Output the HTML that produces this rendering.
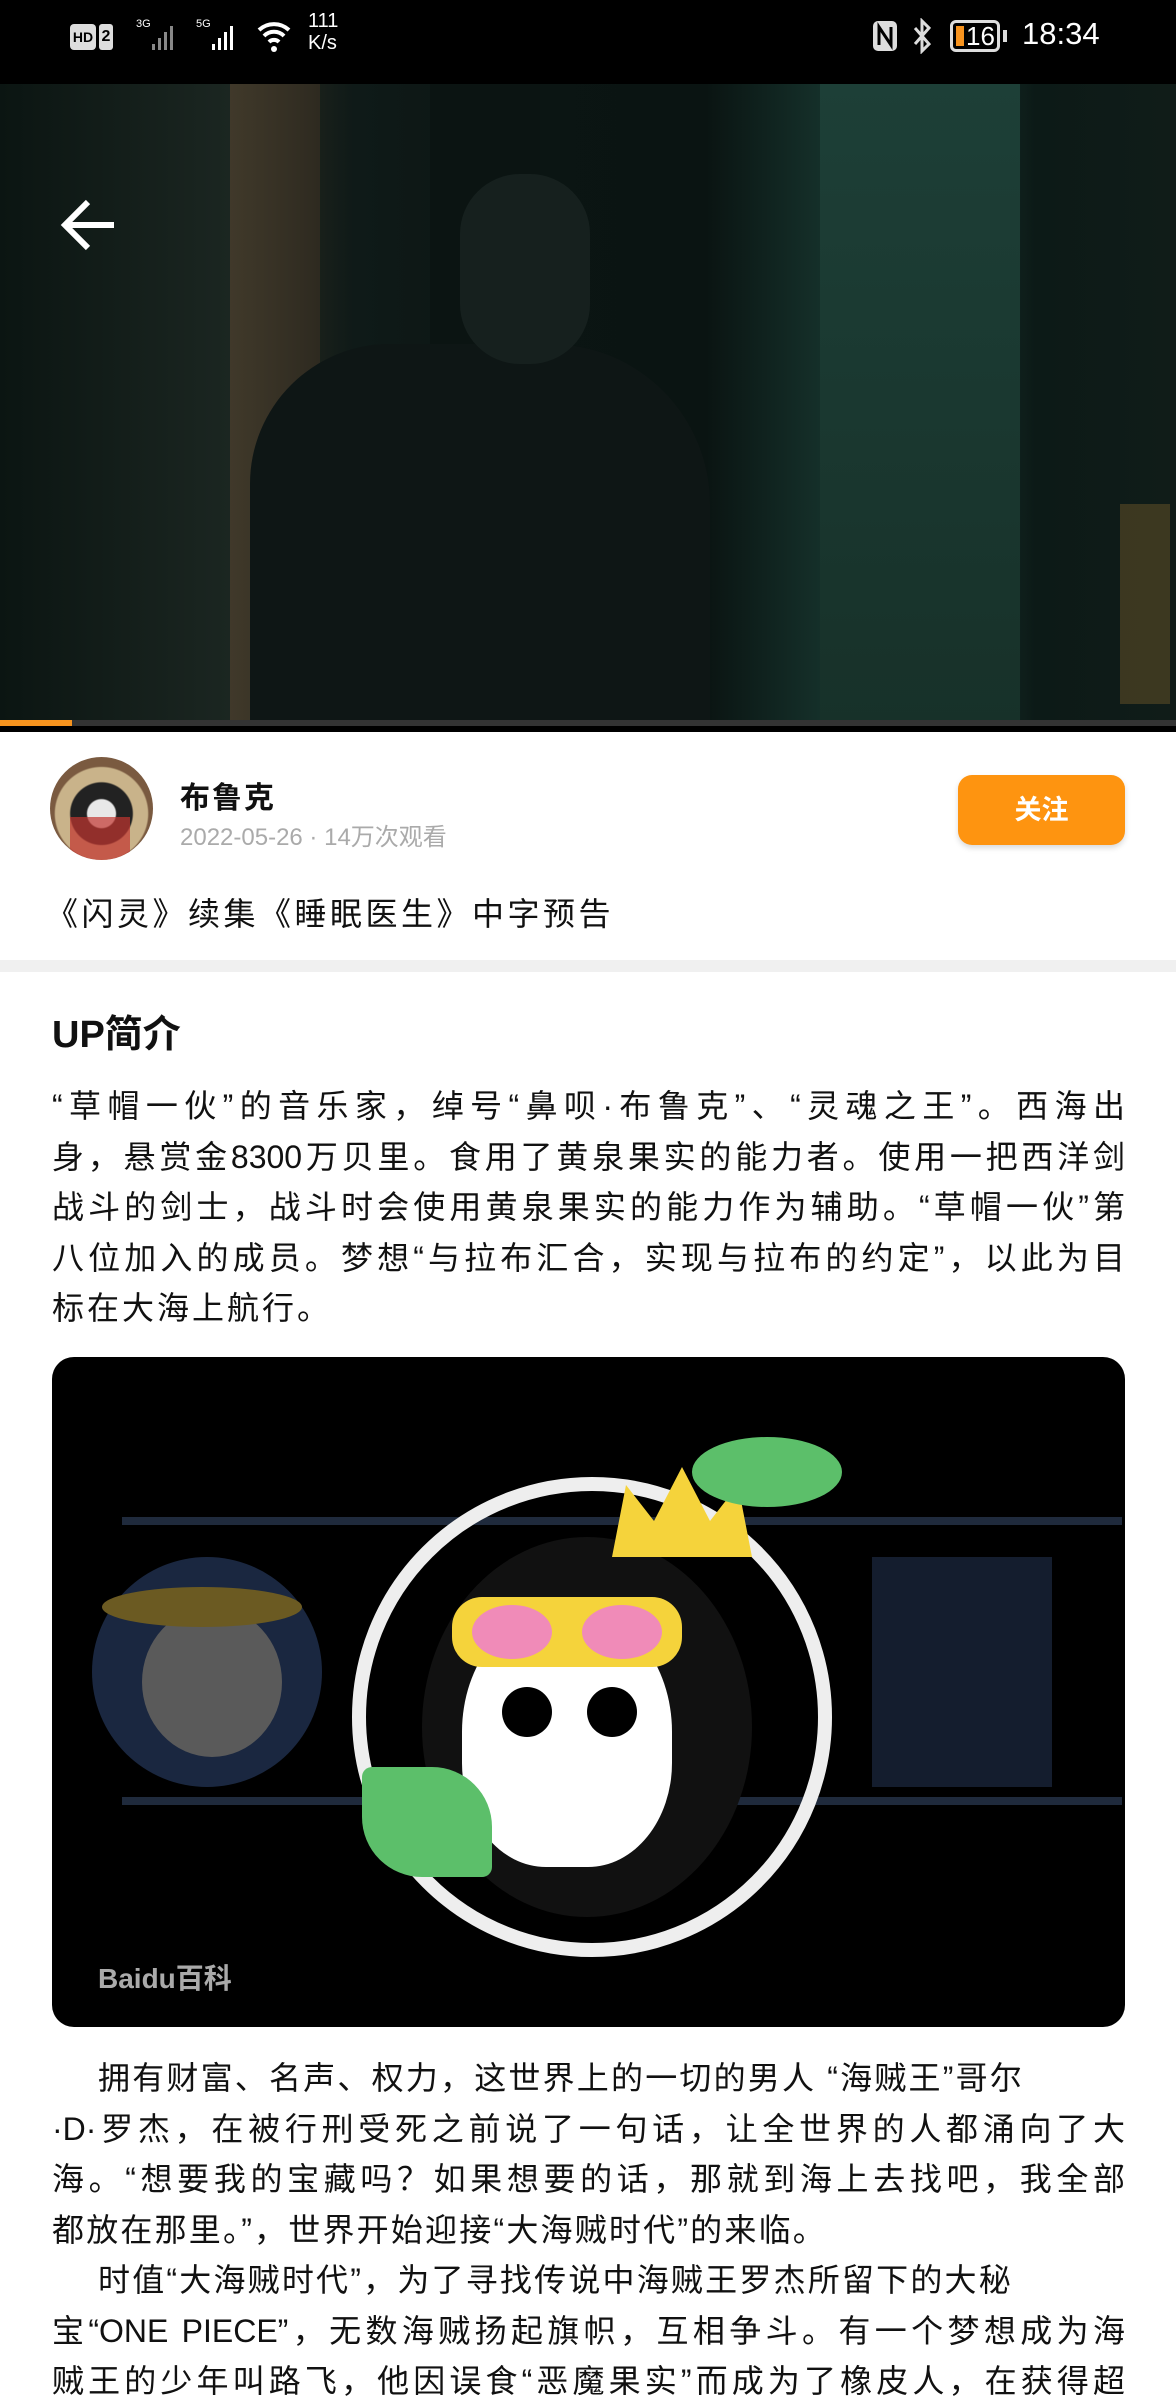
<!DOCTYPE html>
<html><head><meta charset="utf-8"><style>
*{margin:0;padding:0;box-sizing:border-box}
body{width:1176px;height:2400px;overflow:hidden;background:#fff;font-family:"Liberation Sans","Noto Sans CJK SC",sans-serif;position:relative;color:#111}
.abs{position:absolute}
.sb{left:0;top:0;width:1176px;height:84px;background:#000;color:#fff}
.video{left:0;top:84px;width:1176px;height:642px;overflow:hidden;background:linear-gradient(90deg,#0d1a16 0%,#1a2420 10%,#3a3424 16%,#2b2a1e 22%,#0f1a18 30%,#0b1513 45%,#0a1412 60%,#15302a 70%,#1c3a33 80%,#0c1a17 88%,#101c18 100%)}
.txt{left:52px;width:1073px;font-size:32px;line-height:50.5px;color:#111}
.txt div{white-space:nowrap;height:50.5px}
.txt .j{text-align:justify;text-align-last:justify;white-space:normal}
.ind{padding-left:46px}
</style></head><body>
<div class="abs sb">
 <div class="abs" style="left:70px;top:24px;width:26px;height:26px;background:#ddd;border-radius:4px;color:#000;font-size:14px;font-weight:bold;text-align:center;line-height:26px">HD</div>
 <div class="abs" style="left:99px;top:24px;width:14px;height:26px;background:#ddd;border-radius:3px;color:#000;font-size:16px;font-weight:bold;text-align:center;line-height:26px">2</div>
 <div class="abs" style="left:136px;top:18px;font-size:11px">3G</div>
 <svg class="abs" style="left:150px;top:22px" width="30" height="30"><g fill="#888"><rect x="2" y="22" width="3" height="6"/><rect x="8" y="16" width="3" height="12"/><rect x="14" y="10" width="3" height="18"/><rect x="20" y="4" width="3" height="24"/></g></svg>
 <div class="abs" style="left:196px;top:18px;font-size:11px">5G</div>
 <svg class="abs" style="left:210px;top:22px" width="30" height="30"><g fill="#fff"><rect x="2" y="22" width="3" height="6"/><rect x="8" y="16" width="3" height="12"/><rect x="14" y="10" width="3" height="18"/><rect x="20" y="4" width="3" height="24"/></g></svg>
 <svg class="abs" style="left:256px;top:20px" width="36" height="34"><path d="M3 10a22 22 0 0 1 30 0M8 16a14 14 0 0 1 20 0M13 22a7 7 0 0 1 10 0" stroke="#fff" stroke-width="4" fill="none"/><circle cx="18" cy="29" r="3" fill="#fff"/></svg>
 <div class="abs" style="left:308px;top:10px;font-size:20px;line-height:22px">111<br>K/s</div>
 <svg class="abs" style="left:872px;top:20px" width="26" height="32"><rect x="1" y="1" width="24" height="30" rx="5" fill="#ddd"/><path d="M7 25V7l12 18V7" stroke="#000" stroke-width="3" fill="none"/></svg>
 <svg class="abs" style="left:912px;top:18px" width="20" height="36"><path d="M3 10l14 16-7 7V3l7 7L3 26" stroke="#ddd" stroke-width="3" fill="none"/></svg>
 <div class="abs" style="left:950px;top:20px;width:50px;height:32px;border:3px solid #ddd;border-radius:6px"></div>
 <div class="abs" style="left:956px;top:26px;width:8px;height:20px;background:#f7931e"></div>
 <div class="abs" style="left:966px;top:19px;font-size:26px;line-height:34px">16</div>
 <div class="abs" style="left:1003px;top:30px;width:4px;height:12px;background:#ddd"></div>
 <div class="abs" style="left:1022px;top:16px;font-size:31px">18:34</div>
</div>
<div class="abs video">
 <div class="abs" style="left:0;top:0;width:230px;height:642px;background:linear-gradient(90deg,#0b1512,#1b2621)"></div>
 <div class="abs" style="left:230px;top:0;width:90px;height:642px;background:linear-gradient(90deg,#40392a,#2e2a20)"></div>
 <div class="abs" style="left:430px;top:0;width:110px;height:642px;background:#0b1412"></div>
 <div class="abs" style="left:820px;top:0;width:200px;height:642px;background:linear-gradient(180deg,#1d3f37,#173129)"></div>
 <div class="abs" style="left:250px;top:260px;width:460px;height:382px;background:#0e1615;border-radius:140px 160px 0 0"></div>
 <div class="abs" style="left:460px;top:90px;width:130px;height:190px;background:#16201e;border-radius:60px"></div>
 <div class="abs" style="left:1120px;top:420px;width:50px;height:200px;background:#5a4b26;opacity:.6"></div>
 <svg class="abs" style="left:58px;top:114px" width="60" height="54"><path d="M56 27H8M30 4L7 27l23 23" stroke="#fff" stroke-width="6" fill="none"/></svg>
 <div class="abs" style="left:0;top:636px;width:1176px;height:6px;background:#333"></div>
 <div class="abs" style="left:0;top:636px;width:72px;height:6px;background:#f7931e"></div>
</div>
<div class="abs" style="left:0;top:726px;width:1176px;height:6px;background:#000"></div>
<div class="abs" style="left:50px;top:757px;width:103px;height:103px;border-radius:50%;background:radial-gradient(circle at 50% 55%,#e8e8e8 0 18%,#222 20% 40%,#c9b38a 42% 60%,#7a5a40 62%);overflow:hidden">
 <div class="abs" style="left:20px;top:60px;width:60px;height:43px;background:#c2352f;opacity:.7"></div></div>
<div class="abs" style="left:180px;top:773px;font-size:30px;font-weight:bold;letter-spacing:2px">布鲁克</div>
<div class="abs" style="left:180px;top:817px;font-size:24px;color:#aaa">2022-05-26 · 14万次观看</div>
<div class="abs" style="left:958px;top:775px;width:167px;height:70px;background:#fe9410;border-radius:14px;box-shadow:0 3px 6px rgba(0,0,0,.15);color:#fff;font-size:27px;font-weight:bold;text-align:center;line-height:70px">关注</div>
<div class="abs" style="left:46px;top:889px;font-size:32px;letter-spacing:3.5px">《闪灵》续集《睡眠医生》中字预告</div>
<div class="abs" style="left:0;top:960px;width:1176px;height:12px;background:#f0f0f0"></div>
<div class="abs" style="left:52px;top:1003px;font-size:38px;font-weight:bold">UP简介</div>
<div class="abs txt" style="top:1081px">
<div class="j">“草帽一伙”的音乐家，绰号“鼻呗·布鲁克”、“灵魂之王”。西海出</div>
<div class="j">身，悬赏金8300万贝里。食用了黄泉果实的能力者。使用一把西洋剑</div>
<div class="j">战斗的剑士，战斗时会使用黄泉果实的能力作为辅助。“草帽一伙”第</div>
<div class="j">八位加入的成员。梦想“与拉布汇合，实现与拉布的约定”，以此为目</div>
<div style="letter-spacing:3px">标在大海上航行。</div>
</div>
<div class="abs" style="left:52px;top:1357px;width:1073px;height:670px;background:#000;border-radius:22px;overflow:hidden">
 <div class="abs" style="left:70px;top:160px;width:1000px;height:8px;background:#1f2a3c"></div>
 <div class="abs" style="left:70px;top:440px;width:1000px;height:8px;background:#1f2a3c"></div>
 <div class="abs" style="left:40px;top:200px;width:230px;height:230px;border-radius:50%;background:#1a2740"></div>
 <div class="abs" style="left:90px;top:250px;width:140px;height:150px;border-radius:50%;background:#5a5a5a"></div>
 <div class="abs" style="left:50px;top:230px;width:200px;height:40px;border-radius:50%;background:#6b5a22"></div>
 <div class="abs" style="left:820px;top:200px;width:180px;height:230px;background:#141d2e"></div>
 <div class="abs" style="left:300px;top:120px;width:480px;height:480px;border-radius:50%;border:14px solid #eee;background:transparent"></div>
 <div class="abs" style="left:370px;top:180px;width:330px;height:380px;border-radius:50%;background:#111"></div>
 <div class="abs" style="left:410px;top:250px;width:210px;height:260px;border-radius:48% 48% 40% 40%;background:#fff"></div>
 <div class="abs" style="left:400px;top:240px;width:230px;height:70px;border-radius:30px;background:#f5d33b"></div>
 <div class="abs" style="left:420px;top:248px;width:80px;height:54px;border-radius:50%;background:#f08bb8"></div>
 <div class="abs" style="left:530px;top:248px;width:80px;height:54px;border-radius:50%;background:#f08bb8"></div>
 <div class="abs" style="left:450px;top:330px;width:50px;height:50px;border-radius:50%;background:#000"></div>
 <div class="abs" style="left:535px;top:330px;width:50px;height:50px;border-radius:50%;background:#000"></div>
 <div class="abs" style="left:560px;top:110px;width:140px;height:90px;background:#f5d33b;clip-path:polygon(0 100%,10% 20%,30% 60%,50% 0,70% 60%,90% 20%,100% 100%)"></div>
 <div class="abs" style="left:640px;top:80px;width:150px;height:70px;border-radius:50%;background:#5cbf6a"></div>
 <div class="abs" style="left:310px;top:410px;width:130px;height:110px;background:#5cbf6a;border-radius:10px 60px 10px 60px"></div>
 <div class="abs" style="left:46px;top:600px;font-size:28px;font-weight:bold;color:#aaa">Baidu百科</div>
</div>
<div class="abs txt" style="top:2053px">
<div class="ind" style="letter-spacing:2.2px">拥有财富、名声、权力，这世界上的一切的男人 “海贼王”哥尔</div>
<div class="j">·D·罗杰，在被行刑受死之前说了一句话，让全世界的人都涌向了大</div>
<div class="j">海。“想要我的宝藏吗？如果想要的话，那就到海上去找吧，我全部</div>
<div style="letter-spacing:2.2px">都放在那里。”，世界开始迎接“大海贼时代”的来临。</div>
<div class="ind" style="letter-spacing:2.2px">时值“大海贼时代”，为了寻找传说中海贼王罗杰所留下的大秘</div>
<div class="j">宝“ONE PIECE”，无数海贼扬起旗帜，互相争斗。有一个梦想成为海</div>
<div class="j">贼王的少年叫路飞，他因误食“恶魔果实”而成为了橡皮人，在获得超</div>
</div>
</body></html>
